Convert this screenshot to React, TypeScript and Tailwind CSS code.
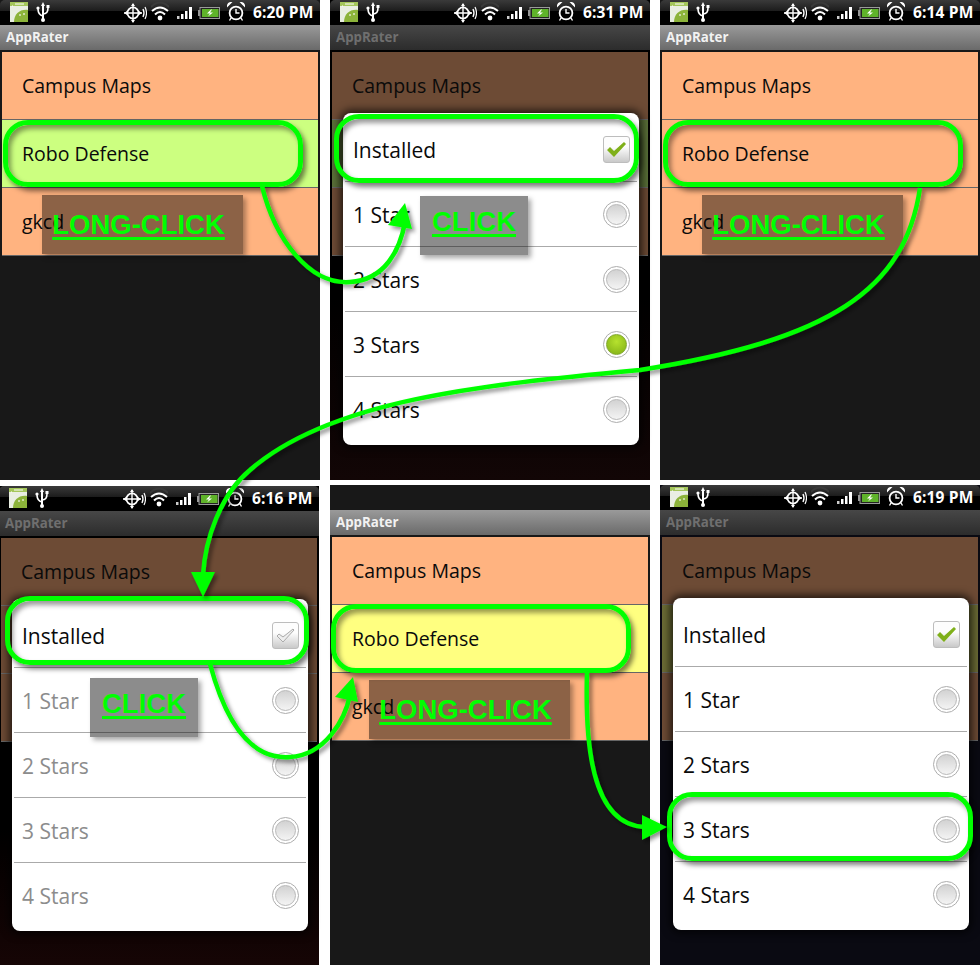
import type { ReactNode } from 'react'

const G = '#00ff00'
const OPEN = "font-['Open_Sans','Noto_Sans',sans-serif]"

// ---- status bar icons ----

function AppIcon() {
  return (
    <svg width="18" height="20" viewBox="0 0 18 20" className="ml-[10px] mt-[2px]">
      <rect width="18" height="20" fill="#e9eee2" />
      <rect width="18" height="4" fill="#a4c65a" />
      <path d="M2 4h1M5 2h9" stroke="#fff" strokeWidth="1" />
      <path d="M4 20 C4 12 10 7 18 8 V20 Z" fill="#8cb33a" />
      <circle cx="10" cy="13" r="1" fill="#dfe8c8" />
      <circle cx="14" cy="12" r="1" fill="#dfe8c8" />
    </svg>
  )
}

function UsbIcon() {
  return (
    <svg width="15" height="20" viewBox="0 0 15 20" className="ml-[8px] mt-[2px]" fill="none" stroke="#fff">
      <path d="M7 3v15" strokeWidth="2" />
      <path d="M5 4l2-4 2 4z" fill="#fff" stroke="none" />
      <circle cx="7" cy="18" r="2" fill="#fff" stroke="none" />
      <path d="M7 14 C3 13 2 11 2 7" strokeWidth="1.6" />
      <path d="M7 12 C11 12 12 10 12 6" strokeWidth="1.6" />
      <circle cx="2" cy="6" r="1.6" fill="#fff" stroke="none" />
      <rect x="10.5" y="3" width="3" height="3" fill="#fff" stroke="none" />
    </svg>
  )
}

function GpsIcon() {
  return (
    <svg width="23" height="20" viewBox="0 0 23 20" className="ml-[73px] mt-[3px]" fill="none" stroke="#fff">
      <circle cx="9" cy="10" r="5.6" strokeWidth="1.8" />
      <path d="M9 1v18M0 10h18" strokeWidth="1.4" />
      <path d="M9 0l-2 3h4zM9 20l-2-3h4zM0 10l3-2v4zM18 10l-3-2v4z" fill="#fff" stroke="none" />
      <path d="M19 6q2 4 0 8" strokeWidth="1.4" />
      <path d="M21 4q3 6 0 12" strokeWidth="1.2" />
    </svg>
  )
}

function WifiIcon() {
  return (
    <svg width="18" height="20" viewBox="0 0 18 20" className="ml-[4px] mt-[2px]" fill="none">
      <path d="M0 5 Q9 -4 18 5" stroke="#3a3a3a" strokeWidth="2" />
      <path d="M1 9 Q9 2 17 9" stroke="#fff" strokeWidth="2" />
      <path d="M4 12.5 Q9 7.5 14 12.5" stroke="#fff" strokeWidth="2" />
      <circle cx="9" cy="16" r="2.4" fill="#fff" />
    </svg>
  )
}

function SignalIcon() {
  return (
    <svg width="16" height="12" viewBox="0 0 16 12" className="ml-[8px] mt-[7px]" fill="#fff">
      <rect x="0" y="9" width="2.5" height="3" fill="#ccc" />
      <rect x="4" y="7" width="2.5" height="5" />
      <rect x="8" y="4" width="2.5" height="8" />
      <rect x="12" y="0" width="3" height="12" />
    </svg>
  )
}

function BatteryIcon() {
  return (
    <svg width="22" height="12" viewBox="0 0 22 12" className="ml-[5px] mt-[7px]">
      <rect x="0" y="3" width="2" height="6" fill="#999" />
      <rect x="2" y="0.5" width="19.5" height="11" fill="#222" stroke="#9a9a9a" />
      <rect x="4" y="2" width="16.5" height="8" fill="#5fb32a" />
      <path d="M13 2.5 L9 6.5 h3 l-2 3 l5 -4 h-3 l2 -3z" fill="#fff" />
    </svg>
  )
}

function AlarmIcon() {
  return (
    <svg width="18" height="19" viewBox="0 0 18 19" className="ml-[7px] mt-[2px]" fill="none" stroke="#fff">
      <circle cx="9" cy="11" r="6.4" strokeWidth="1.8" />
      <path d="M9 7v4h3.5" strokeWidth="1.4" />
      <path d="M0.5 4 Q1 1 4 0.5 Z M17.5 4 Q17 1 14 0.5 Z" fill="#fff" strokeWidth="1.4" />
      <path d="M4 16l-1.5 2.5M14 16l1.5 2.5" strokeWidth="1.4" />
    </svg>
  )
}

function StatusBar({ time }: { time?: string }) {
  if (!time) return <div className="h-[25px] shrink-0 bg-[#181818]" />
  return (
    <div className="flex h-[25px] shrink-0 rounded-t-[5px] bg-[linear-gradient(#3a3a3a_0,#1c1c1c_44%,#000_46%)]">
      <AppIcon />
      <UsbIcon />
      <GpsIcon />
      <WifiIcon />
      <SignalIcon />
      <BatteryIcon />
      <AlarmIcon />
      <span className={`${OPEN} ml-[8px] text-[15.5px] font-bold leading-[25px] tracking-[0.15px] text-white`}>{time}</span>
    </div>
  )
}

// ---- list + dialog ----

function TitleBar({ dim }: { dim: boolean }) {
  return (
    <div className={`${OPEN} h-[25px] shrink-0 pl-[6px] text-[13.3px] font-bold leading-[25px] ${dim ? 'bg-[linear-gradient(#474747,#2c2c2c)] text-[#6f6f6f]' : 'bg-[linear-gradient(#9a9a9a,#6a6a6a)] text-[#f2f2f2]'}`}>
      AppRater
    </div>
  )
}

function AppList({ colors }: { colors: [string, string, string] }) {
  const names = ['Campus Maps', 'Robo Defense', 'gkcd']
  return (
    <div className="px-[2px] pt-[2px]">
      {names.map((n, i) => (
        <div
          key={n}
          className={`${OPEN} flex h-[68px] items-center border-b border-[#666] pl-[20px] pt-px text-[19.5px] text-[#0a0a0a]`}
          style={{ backgroundColor: colors[i] }}
        >
          {n}
        </div>
      ))}
    </div>
  )
}

function Radio({ on }: { on?: boolean }) {
  return (
    <div className="flex h-[27px] w-[27px] items-center justify-center rounded-full border border-[#adadad] bg-white">
      <div className={`h-[21px] w-[21px] rounded-full border ${on ? 'border-[#7fa62a] bg-[radial-gradient(circle_at_50%_35%,#b6e22e,#7fae14)]' : 'border-[#b8b8b8] bg-[linear-gradient(#d2d2d2,#f4f4f4)]'}`} />
    </div>
  )
}

function Check({ dim }: { dim?: boolean }) {
  return (
    <div className="flex h-[27px] w-[27px] items-center justify-center rounded-[3px] border border-[#bdbdbd] bg-[linear-gradient(#fdfdfd_40%,#c9c9c9)]">
      <svg width="21" height="17" viewBox="0 0 21 17">
        {dim ? (
          <path d="M2 9l6 6L19 3l-1-1L8 10 4 7z" fill="#eee" stroke="#aaa" strokeWidth="1" />
        ) : (
          <path d="M1 9l3-3 4 4L18 1l2 2L8 16z" fill="#7fb01a" />
        )}
      </svg>
    </div>
  )
}

function Dialog({ picked, off }: { picked?: boolean; off?: boolean }) {
  const stars = ['1 Star', '2 Stars', '3 Stars', '4 Stars']
  const label = 'pt-[3px]'
  return (
    <div className={`${OPEN} absolute left-[13px] top-[113px] h-[332px] w-[296px] rounded-[8px] bg-white pb-[3px] pt-[4px] text-[21px] shadow-[0_0_8px_3px_rgba(0,0,0,0.7)]`}>
      <div className="mx-[2px] flex h-[65px] items-center justify-between border-b border-[#aaa] pl-[8px] pr-[7px] text-[#0a0a0a]">
        <span className={label}>Installed</span>
        <Check dim={off} />
      </div>
      {stars.map((s, i) => (
        <div
          key={s}
          className={`mx-[2px] flex h-[65px] items-center justify-between pl-[8px] pr-[7px] ${i < 3 ? 'border-b border-[#aaa]' : ''} ${off ? 'text-[#8c8c8c]' : 'text-[#0a0a0a]'}`}
        >
          <span className={label}>{s}</span>
          <Radio on={picked && i === 2} />
        </div>
      ))}
    </div>
  )
}

function Phone({ time, dim, colors, bottom, picked, off, nudge }: {
  time?: string
  dim: boolean
  colors: [string, string, string]
  bottom: string
  picked?: boolean
  off?: boolean
  nudge?: boolean
}) {
  return (
    <div className={`relative h-[480px] w-[320px] ${nudge ? '-ml-px mt-px' : ''}`} style={{ background: bottom }}>
      <StatusBar time={time} />
      <TitleBar dim={dim} />
      <AppList colors={colors} />
      {dim && <Dialog picked={picked} off={off} />}
    </div>
  )
}

// ---- annotations drawn over the screenshots ----

function Callout({ className }: { className: string }) {
  return (
    <div className={`absolute rounded-[25px] border-[5px] border-[#00ff00] shadow-[3px_4px_5px_rgba(0,0,0,0.5),inset_3px_4px_5px_rgba(0,0,0,0.4)] ${className}`} />
  )
}

function Tag({ className, children }: { className: string; children: ReactNode }) {
  return (
    <div className={`absolute flex items-center justify-center bg-black/45 font-['Liberation_Sans',Arial,sans-serif] text-[27.5px] font-bold leading-none text-[#00ff00] underline decoration-[3px] underline-offset-[3px] shadow-[3px_3px_5px_rgba(0,0,0,0.35)] ${className}`}>
      {children}
    </div>
  )
}

function Arrows() {
  const lines = [
    'M262 186 C275 240 310 285 350 282 C385 280 400 250 405 222',
    'M920 188 C905 290 830 340 640 370 C480 385 330 400 250 470 C220 495 205 540 203 575',
    'M210 664 C225 720 250 760 290 757 C325 755 345 720 350 695',
    'M587 672 C585 740 590 825 645 827',
  ]
  const heads = ['405,203 388,225 412,229', '203,597 191,572 215,572', '353,677 335,697 358,702', '667,827 642,815 642,840']
  return (
    <svg className="absolute left-0 top-0" width="980" height="965" viewBox="0 0 980 965" fill="none">
      <defs>
        <filter id="sh" x="-10%" y="-10%" width="120%" height="120%">
          <feDropShadow dx="3" dy="3" stdDeviation="2" floodColor="#000" floodOpacity="0.45" />
        </filter>
      </defs>
      <g filter="url(#sh)">
        {lines.map((d) => (
          <path key={d} d={d} stroke={G} strokeWidth="4.5" />
        ))}
        {heads.map((p) => (
          <polygon key={p} points={p} fill={G} />
        ))}
      </g>
    </svg>
  )
}

export default function App() {
  const peach = '#ffb380'
  const dimPeach = '#6d4b35'
  return (
    <div className="relative h-[965px] w-[980px] overflow-hidden bg-white">
      <div className="grid grid-cols-[320px_320px_320px] gap-x-[10px] gap-y-[5px]">
        <Phone time="6:20 PM" dim={false} colors={[peach, '#ccff80', peach]} bottom="#181818" />
        <Phone time="6:31 PM" dim colors={[dimPeach, '#5a7038', dimPeach]} bottom="linear-gradient(#000 60%, #120606)" picked />
        <Phone time="6:14 PM" dim={false} colors={[peach, peach, peach]} bottom="#181818" />
        <Phone time="6:16 PM" dim colors={[dimPeach, dimPeach, dimPeach]} bottom="linear-gradient(#000 70%, #160505)" off nudge />
        <Phone dim={false} colors={[peach, '#ffff80', peach]} bottom="#181818" />
        <Phone time="6:19 PM" dim colors={[dimPeach, '#6b6b35', dimPeach]} bottom="#0a0a12" />
      </div>

      <Callout className="left-[3px] top-[120px] h-[67px] w-[300px]" />
      <Callout className="left-[334px] top-[114px] h-[69px] w-[305px]" />
      <Callout className="left-[663px] top-[120px] h-[67px] w-[300px]" />
      <Callout className="left-[5px] top-[596px] h-[69px] w-[304px]" />
      <Callout className="left-[331px] top-[604px] h-[69px] w-[300px]" />
      <Callout className="left-[667px] top-[792px] h-[69px] w-[306px]" />

      <Tag className="left-[42px] top-[195px] h-[59px] w-[201px] pr-[8px]">LONG-CLICK</Tag>
      <Tag className="left-[702px] top-[195px] h-[59px] w-[201px] pr-[8px]">LONG-CLICK</Tag>
      <Tag className="left-[369px] top-[680px] h-[59px] w-[201px] pr-[8px]">LONG-CLICK</Tag>
      <Tag className="left-[420px] top-[196px] h-[59px] w-[108px] pb-[7px]">CLICK</Tag>
      <Tag className="left-[90px] top-[678px] h-[59px] w-[108px] pb-[7px]">CLICK</Tag>

      <Arrows />
    </div>
  )
}
